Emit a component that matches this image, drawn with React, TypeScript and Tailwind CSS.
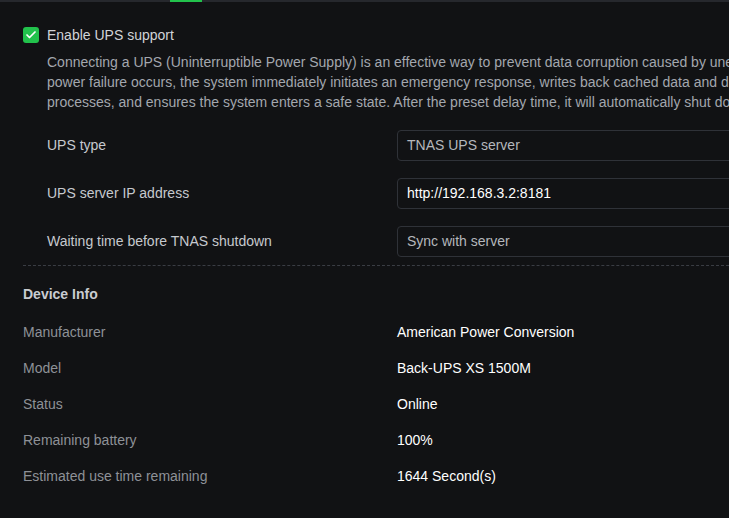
import { Check } from 'lucide-react';

const descriptionLines = [
  'Connecting a UPS (Uninterruptible Power Supply) is an effective way to prevent data corruption caused by unexpected power outages. When a',
  'power failure occurs, the system immediately initiates an emergency response, writes back cached data and disables running services and',
  'processes, and ensures the system enters a safe state. After the preset delay time, it will automatically shut down the TNAS device.',
];

const formRows = [
  { label: 'UPS type', value: 'TNAS UPS server', muted: true },
  { label: 'UPS server IP address', value: 'http://192.168.3.2:8181', muted: false },
  { label: 'Waiting time before TNAS shutdown', value: 'Sync with server', muted: true },
];

const deviceInfo = [
  { label: 'Manufacturer', value: 'American Power Conversion' },
  { label: 'Model', value: 'Back-UPS XS 1500M' },
  { label: 'Status', value: 'Online' },
  { label: 'Remaining battery', value: '100%' },
  { label: 'Estimated use time remaining', value: '1644 Second(s)' },
];

export default function App() {
  return (
    <div
      className="w-[729px] h-[518px] overflow-hidden bg-[#111214] text-[14px]"
      style={{ fontFamily: '"Liberation Sans", Arial, sans-serif' }}
    >
      {/* tab strip underline with the active tab marker */}
      <div className="flex h-[2px] bg-[#26282d]">
        <div className="ml-[170px] w-[32px] h-[2px] bg-[#22c24c]" />
      </div>

      <div className="pl-[23px] pt-[25px]">
        {/* Enable toggle */}
        <div className="flex items-center gap-2 h-4">
          <span className="flex items-center justify-center w-4 h-4 rounded-[3px] bg-[#22c24c]">
            <Check className="w-3 h-3 text-white" strokeWidth={3.5} />
          </span>
          <span className="leading-4 text-[#d2d4d8] whitespace-nowrap">Enable UPS support</span>
        </div>

        <div className="pl-6 mt-[9px] text-[#a3a7ae] leading-5">
          {descriptionLines.map((line) => (
            <div key={line} className="whitespace-nowrap">
              {line}
            </div>
          ))}
        </div>

        {/* UPS settings form */}
        <div className="mt-[18px] flex flex-col gap-[17px]">
          {formRows.map((row) => (
            <div key={row.label} className="grid grid-cols-[374px_1fr] items-center">
              <div className="pl-6 text-[#c6c9ce] whitespace-nowrap">{row.label}</div>
              <div
                className={`w-[420px] h-[31px] flex items-center px-[9px] border border-[#2f3238] rounded-[4px] whitespace-nowrap ${
                  row.muted ? 'text-[#b4b7bc]' : 'text-white'
                }`}
              >
                {row.value}
              </div>
            </div>
          ))}
        </div>

        <div className="mt-[8px] border-t border-dashed border-[#3a3d44]" />

        <div className="mt-[18px] leading-5 font-bold text-[#c9ccd1]">Device Info</div>

        <div className="mt-[10px]">
          {deviceInfo.map((item) => (
            <div key={item.label} className="grid grid-cols-[374px_1fr] h-9 items-center">
              <div className="text-[#8e9197] whitespace-nowrap">{item.label}</div>
              <div className="text-white whitespace-nowrap">{item.value}</div>
            </div>
          ))}
        </div>
      </div>
    </div>
  );
}
